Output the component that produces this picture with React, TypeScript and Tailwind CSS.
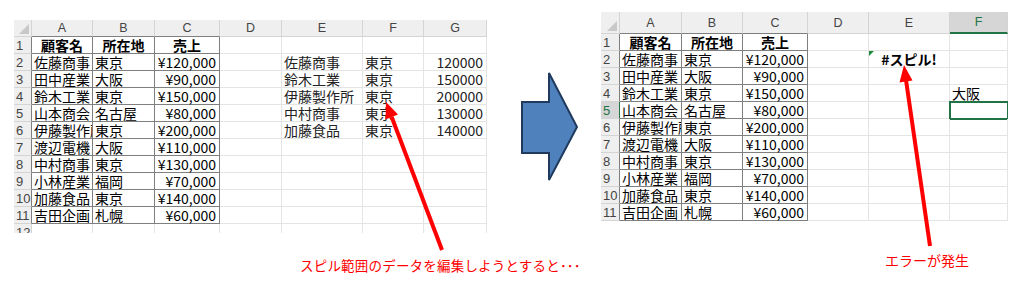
import clsx from "clsx";

type Col = { letter: string; w: string; hot?: boolean };
type Cell = { t: string; align?: "l" | "r" | "c"; bold?: boolean; thin?: boolean; sel?: boolean; flag?: boolean; clip?: boolean };

const customers = [
  ["佐藤商事", "東京", "¥120,000"],
  ["田中産業", "大阪", "¥90,000"],
  ["鈴木工業", "東京", "¥150,000"],
  ["山本商会", "名古屋", "¥80,000"],
  ["伊藤製作所", "東京", "¥200,000"],
  ["渡辺電機", "大阪", "¥110,000"],
  ["中村商事", "東京", "¥130,000"],
  ["小林産業", "福岡", "¥70,000"],
  ["加藤食品", "東京", "¥140,000"],
  ["吉田企画", "札幌", "¥60,000"],
];

const spill = [
  ["佐藤商事", "東京", "120000"],
  ["鈴木工業", "東京", "150000"],
  ["伊藤製作所", "東京", "200000"],
  ["中村商事", "東京", "130000"],
  ["加藤食品", "東京", "140000"],
];

// build the rows of a sheet: A-C is the bordered table, anything else comes from extra
function buildRows(nCols: number, extra: Record<string, Cell>): Cell[][] {
  const rows: Cell[][] = [];
  for (let r = 0; r < 11; r++) {
    const row: Cell[] = [];
    for (let c = 0; c < nCols; c++) {
      if (r === 0 && c < 3) row.push({ t: ["顧客名", "所在地", "売上"][c], align: "c", bold: true });
      else if (r > 0 && c < 3)
        row.push({
          t: customers[r - 1][c],
          align: c === 2 ? "r" : "l",
          clip: c === 0 && customers[r - 1][c].length > 4, // B column has data, so A text gets cut
        });
      else row.push(extra[`${r + 1}-${c}`] ?? { t: "" });
    }
    rows.push(row);
  }
  return rows;
}

const leftExtra: Record<string, Cell> = {};
spill.forEach((s, i) => {
  leftExtra[`${i + 2}-4`] = { t: s[0], thin: true };
  leftExtra[`${i + 2}-5`] = { t: s[1], thin: true };
  leftExtra[`${i + 2}-6`] = { t: s[2], align: "r", thin: true };
});

const rightExtra: Record<string, Cell> = {
  "2-4": { t: "#スピル!", align: "c", bold: true, flag: true },
  "4-5": { t: "大阪" },
  "5-5": { t: "", sel: true },
};

function Sheet({
  cols,
  rowHead,
  headH,
  rows,
  hotRow,
  tail,
}: {
  cols: Col[];
  rowHead: string;
  headH: string;
  rows: Cell[][];
  hotRow?: number;
  tail?: boolean;
}) {
  return (
    <div className="flex flex-col overflow-hidden text-[14px] text-black [font-family:'Noto_Sans_CJK_JP',sans-serif]">
      {/* column letters */}
      <div className={clsx("flex bg-[#efefef]", headH)}>
        <div className={clsx("shrink-0 relative border-r border-b border-[#d4d4d4]", rowHead)}>
          <svg className="absolute right-[2px] bottom-[2px]" width="10" height="10" viewBox="0 0 10 10">
            <polygon points="10,0 10,10 0,10" fill="#c8c8c8" />
          </svg>
        </div>
        {cols.map((c, i) => (
          <div
            key={c.letter}
            className={clsx(
              "shrink-0 flex items-center justify-center text-[12.5px] leading-[14px] [font-family:'Liberation_Sans',sans-serif] border-r",
              c.w,
              c.hot
                ? "bg-[#d6d6d6] text-[#217346] border-[#d4d4d4] border-b-2 border-b-[#217346]"
                : "text-[#444] border-[#d4d4d4] border-b",
              !c.hot && i < 3 && "border-b-[#7f7f7f]"
            )}
          >
            {c.letter}
          </div>
        ))}
      </div>
      {rows.map((row, r) => (
        <div key={r} className="flex h-[17px]">
          <div
            className={clsx(
              "shrink-0 flex items-center pl-[2px] text-[13px] leading-[15px] [font-family:'Liberation_Sans',sans-serif] border-r border-b",
              rowHead,
              hotRow === r + 1
                ? "bg-[#d6d6d6] text-[#217346] border-b-[#d4d4d4] border-r-[#217346]"
                : "bg-[#efefef] text-[#444] border-[#d4d4d4] border-r-[#7f7f7f]"
            )}
          >
            {r + 1}
          </div>
          {row.map((cell, c) => (
            <div
              key={c}
              className={clsx(
                "shrink-0 relative flex items-center whitespace-nowrap leading-[16px] border-r border-b",
                cols[c].w,
                cell.clip && "overflow-hidden",
                c < 3 ? "border-[#7f7f7f]" : "border-[#e4e4e4]",
                cell.align === "r" ? "justify-end pr-[3px]" : cell.align === "c" ? "justify-center" : "justify-start pl-[2px]",
                cell.bold && "font-bold",
                cell.thin && "text-[#222]",
                cell.sel && "outline-2 -outline-offset-1 outline-[#217346]"
              )}
            >
              {cell.flag && (
                <svg className="absolute left-0 top-0" width="5" height="5" viewBox="0 0 5 5">
                  <polygon points="0,0 5,0 0,5" fill="#1e8a3c" />
                </svg>
              )}
              {cell.t}
            </div>
          ))}
        </div>
      ))}
      {tail && (
        <div className="flex h-[9px] overflow-hidden">
          <div
            className={clsx(
              "shrink-0 pl-[2px] bg-[#efefef] border-r border-[#d4d4d4] text-[13px] text-[#444] leading-[17px] [font-family:'Liberation_Sans',sans-serif]",
              rowHead
            )}
          >
            12
          </div>
          {cols.map((c) => (
            <div key={c.letter} className={clsx("shrink-0 border-r border-[#e4e4e4]", c.w)} />
          ))}
        </div>
      )}
    </div>
  );
}

const leftCols: Col[] = [
  { letter: "A", w: "w-[61px]" },
  { letter: "B", w: "w-[62px]" },
  { letter: "C", w: "w-[65px]" },
  { letter: "D", w: "w-[62px]" },
  { letter: "E", w: "w-[81px]" },
  { letter: "F", w: "w-[61px]" },
  { letter: "G", w: "w-[63px]" },
];

const rightCols: Col[] = [
  { letter: "A", w: "w-[62px]" },
  { letter: "B", w: "w-[61px]" },
  { letter: "C", w: "w-[65px]" },
  { letter: "D", w: "w-[61px]" },
  { letter: "E", w: "w-[81px]" },
  { letter: "F", w: "w-[58px]", hot: true },
];

export default function App() {
  return (
    <div className="relative w-[1024px] h-[289px] overflow-hidden bg-white [font-family:'Noto_Sans_CJK_JP',sans-serif]">
      <div className="flex items-start">
        {/* before */}
        <div className="ml-[14px] mt-[20px] w-[473px] flex flex-col">
          <Sheet cols={leftCols} rowHead="w-[18px]" headH="h-[17px]" rows={buildRows(7, leftExtra)} tail />
          <div className="mt-[23px] ml-[286px] whitespace-nowrap text-[13.5px] tracking-[0.2px] leading-[18px] text-[#ff0000]">
            スピル範囲のデータを編集しようとすると･･･
          </div>
        </div>

        {/* block arrow */}
        <svg className="ml-[33px] mt-[71px] shrink-0" width="60" height="112" viewBox="0 0 60 112">
          <polygon
            points="2,31 29,31 29,2 57,56 29,109 29,82 2,82"
            fill="#4f81bd"
            stroke="#1f3a5c"
            strokeWidth="2"
            strokeLinejoin="miter"
          />
        </svg>

        {/* after */}
        <div className="ml-[21px] mt-[12px] w-[407px] flex flex-col">
          <Sheet cols={rightCols} rowHead="w-[19px]" headH="h-[22px]" rows={buildRows(6, rightExtra)} hotRow={5} />
          <div className="mt-[30px] ml-[284px] whitespace-nowrap text-[14px] leading-[18px] text-[#ff0000]">
            エラーが発生
          </div>
        </div>
      </div>

      {/* red pointer arrows over the sheets */}
      <svg className="absolute inset-0 pointer-events-none" width="1024" height="289" viewBox="0 0 1024 289">
        <line x1="442" y1="250" x2="391.7" y2="117" stroke="#ff0000" strokeWidth="4" />
        <polygon points="386,102 398,114.6 385.5,119.4" fill="#ff0000" />
        <line x1="930" y1="246" x2="906" y2="80" stroke="#ff0000" strokeWidth="4" />
        <polygon points="904,65 912.5,80.5 899.5,82.5" fill="#ff0000" />
      </svg>
    </div>
  );
}
